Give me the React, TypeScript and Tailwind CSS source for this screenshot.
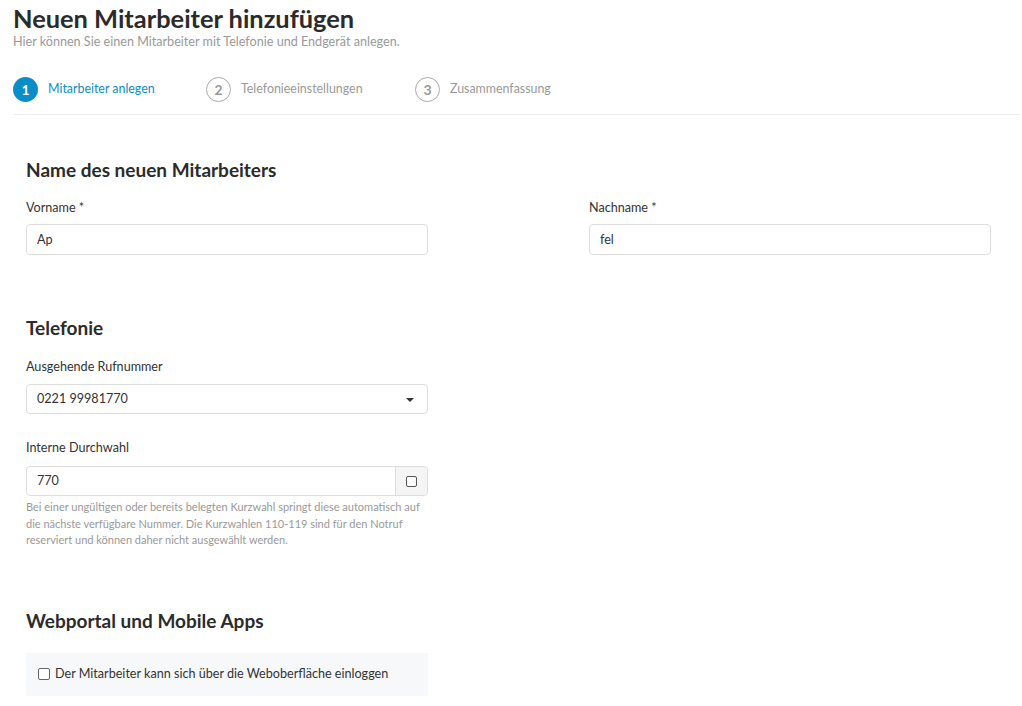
import { useState } from "react";

const steps = [
  { n: 1, label: "Mitarbeiter anlegen", active: true },
  { n: 2, label: "Telefonieeinstellungen", active: false },
  { n: 3, label: "Zusammenfassung", active: false },
];

export default function App() {
  const [vorname, setVorname] = useState("Ap");
  const [nachname, setNachname] = useState("fel");
  const [durchwahl, setDurchwahl] = useState("770");

  return (
    <div className="min-h-screen bg-white text-[#333] font-['Lato','Liberation_Sans',sans-serif]">
      <div className="pl-[13px] pr-[2px] pt-[4px]">
        <h1 className="text-[25.4px] leading-[28px] font-bold text-[#2b2b2b]">Neuen Mitarbeiter hinzufügen</h1>
        <p className="mt-[2px] text-[12.6px] leading-[16px] text-[#999]">
          Hier können Sie einen Mitarbeiter mit Telefonie und Endgerät anlegen.
        </p>

        {/* Schritte */}
        <div className="mt-[26px] flex items-center h-[26px]">
          {steps.map((s) => (
            <div key={s.n} className="flex items-center w-[193px] [&:nth-child(2)]:w-[209px]">
              <span
                className={
                  s.active
                    ? "flex h-[25px] w-[25px] items-center justify-center rounded-full bg-[#0a8ec8] text-[14px] font-bold text-white"
                    : "flex h-[25px] w-[25px] items-center justify-center rounded-full border border-[#aaa] text-[14px] font-bold text-[#999]"
                }
              >
                {s.n}
              </span>
              <span className={"ml-[10px] text-[12.4px] " + (s.active ? "text-[#0a8ec8]" : "text-[#999]")}>{s.label}</span>
            </div>
          ))}
        </div>
        <div className="mt-[12px] h-px bg-[#eee]" />
      </div>

      <div className="px-[26px]">
        {/* Name */}
        <h2 className="mt-[44px] text-[19px] leading-[22px] font-bold text-[#2b2b2b]">Name des neuen Mitarbeiters</h2>
        <div className="mt-[19px] grid grid-cols-[402px_402px] gap-x-[161px]">
          <div>
            <label className="block text-[12.6px] leading-[16px]">Vorname *</label>
            <input
              value={vorname}
              onChange={(e) => setVorname(e.target.value)}
              className="mt-[8px] block h-[31px] w-full rounded-[4px] border border-[#ddd] px-[10px] text-[12.6px] outline-none"
            />
          </div>
          <div>
            <label className="block text-[12.6px] leading-[16px]">Nachname *</label>
            <input
              value={nachname}
              onChange={(e) => setNachname(e.target.value)}
              className="mt-[8px] block h-[31px] w-full rounded-[4px] border border-[#ddd] px-[10px] text-[12.6px] outline-none"
            />
          </div>
        </div>

        {/* Telefonie */}
        <h2 className="mt-[62px] text-[19px] leading-[22px] font-bold text-[#2b2b2b]">Telefonie</h2>
        <div className="w-[402px]">
          <label className="mt-[20px] block text-[12.6px] leading-[16px]">Ausgehende Rufnummer</label>
          <div className="mt-[9px] flex h-[30px] items-center justify-between rounded-[4px] border border-[#ddd] px-[10px] text-[12.6px]">
            <span>0221 99981770</span>
            <svg width="10" height="6" viewBox="0 0 10 6" className="mr-[2px] mt-[2px]">
              <path d="M1 1h8L5 5z" fill="#333" />
            </svg>
          </div>

          <label className="mt-[26px] block text-[12.6px] leading-[16px]">Interne Durchwahl</label>
          <div className="mt-[10px] flex h-[30px] rounded-[4px] border border-[#ddd]">
            <input
              value={durchwahl}
              onChange={(e) => setDurchwahl(e.target.value)}
              className="flex-1 min-w-0 px-[10px] text-[12.6px] outline-none rounded-l-[4px]"
            />
            <div className="flex w-[32px] items-center justify-center border-l border-[#ddd] bg-[#f5f5f5] rounded-r-[4px]">
              <span className="h-[11px] w-[11px] rounded-[2px] border border-[#555] bg-white" />
            </div>
          </div>
          <p className="mt-[3px] text-[11px] leading-[16.5px] text-[#999]">
            Bei einer ungültigen oder bereits belegten Kurzwahl springt diese automatisch auf die nächste verfügbare
            Nummer. Die Kurzwahlen 110-119 sind für den Notruf reserviert und können daher nicht ausgewählt werden.
          </p>
        </div>

        {/* Webportal */}
        <h2 className="mt-[61px] text-[19px] leading-[22px] font-bold text-[#2b2b2b]">Webportal und Mobile Apps</h2>
        <div className="mt-[21px] flex h-[43px] w-[402px] items-center bg-[#f7f8fa] px-[12px]">
          <span className="h-[12px] w-[12px] rounded-[2px] border border-[#666] bg-white" />
          <span className="ml-[5px] text-[12.6px]">Der Mitarbeiter kann sich über die Weboberfläche einloggen</span>
        </div>
      </div>
    </div>
  );
}
